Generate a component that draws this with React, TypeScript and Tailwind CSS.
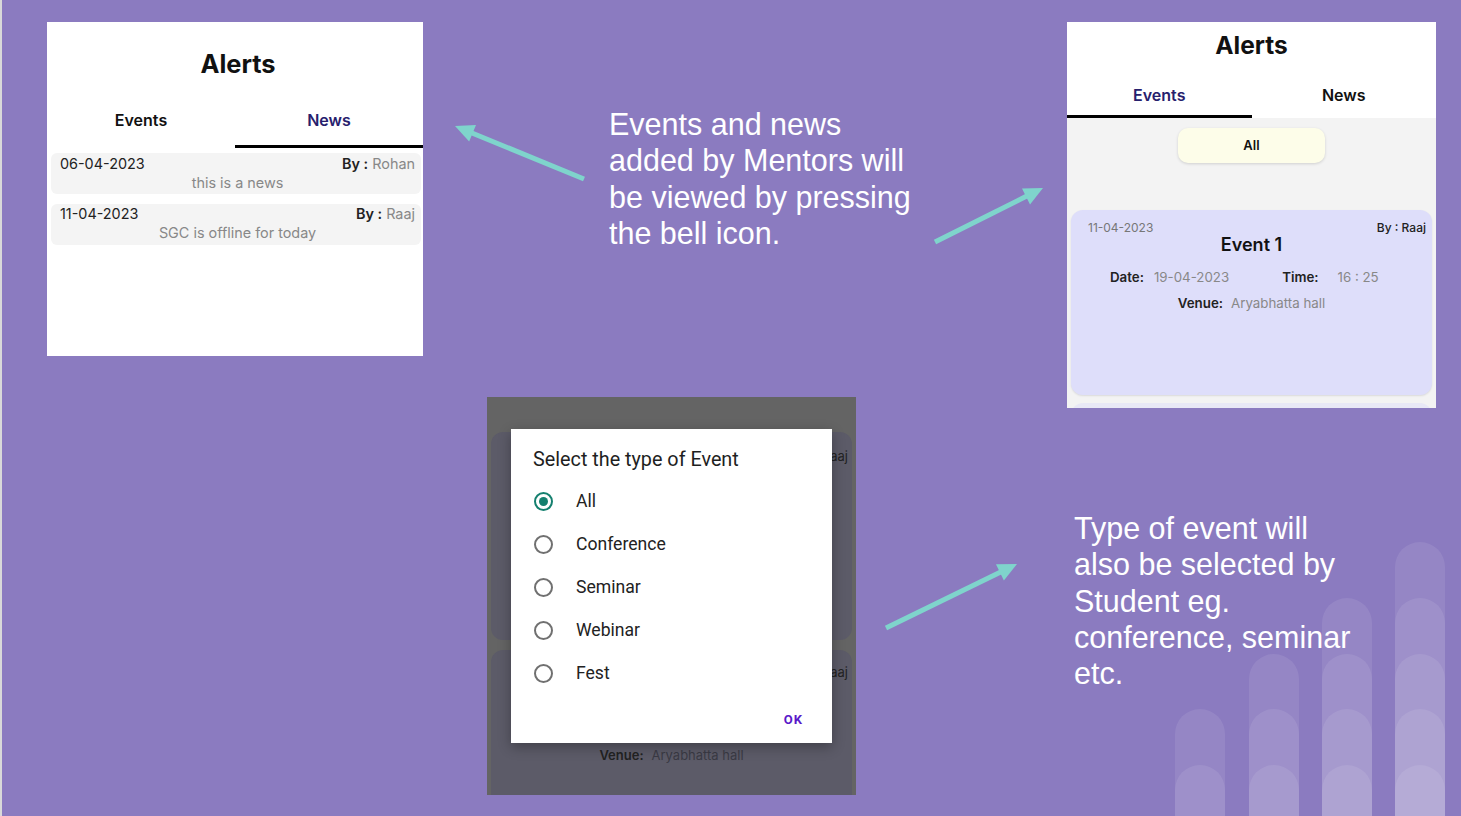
import React from "react";

const TEAL = "#7fd4cc";

function Arrow({ x1, y1, x2, y2 }: { x1: number; y1: number; x2: number; y2: number }) {
  const dx = x2 - x1;
  const dy = y2 - y1;
  const len = Math.hypot(dx, dy);
  const ux = dx / len;
  const uy = dy / len;
  const hl = 19;
  const hw = 9;
  const bx = x2 - ux * hl;
  const by = y2 - uy * hl;
  const px = -uy;
  const py = ux;
  const pts = `${x2},${y2} ${bx + px * hw},${by + py * hw} ${bx - px * hw},${by - py * hw}`;
  return (
    <g>
      <line x1={x1} y1={y1} x2={bx + ux * 2} y2={by + uy * 2} stroke={TEAL} strokeWidth={5} />
      <polygon points={pts} fill={TEAL} />
    </g>
  );
}

function Pills({ left, tops }: { left: number; tops: number[] }) {
  return (
    <>
      {tops.map((t, i) => (
        <div
          key={i}
          className="absolute w-[50px] rounded-t-[25px] bg-white/[0.09]"
          style={{ left, top: t, height: 816 - t }}
        />
      ))}
    </>
  );
}

function Radio({ checked, label }: { checked?: boolean; label: string }) {
  return (
    <div className="flex h-[43px] items-center">
      <div
        className={
          checked
            ? "ml-[23px] flex h-[19px] w-[19px] items-center justify-center rounded-full border-2 border-[#15806f]"
            : "ml-[23px] flex h-[19px] w-[19px] items-center justify-center rounded-full border-2 border-[#707070]"
        }
      >
        {checked && <div className="h-[9px] w-[9px] rounded-full bg-[#15806f]" />}
      </div>
      <span className="ml-[23px] text-[17.6px] text-[#222]">{label}</span>
    </div>
  );
}

export default function App() {
  return (
    <div
      className="relative h-[816px] w-[1461px] overflow-hidden bg-[#8b7bc0]"
      style={{ fontFamily: "Inter, 'Noto Sans', sans-serif" }}
    >
      <div className="absolute left-0 top-0 h-full w-[2px] bg-[#d9d9d9]" />

      {/* decorative pills */}
      <Pills left={1175} tops={[709, 765]} />
      <Pills left={1249} tops={[654, 709, 765]} />
      <Pills left={1322} tops={[598, 654, 709, 765]} />
      <Pills left={1395} tops={[542, 598, 654, 709, 765]} />

      {/* Panel 1: News */}
      <div className="absolute left-[47px] top-[22px] flex h-[334px] w-[376px] flex-col bg-white">
        <div className="flex h-[82px] shrink-0 items-center justify-center pl-[6px] pt-[2px] text-[25.4px] font-bold text-[#111]">Alerts</div>
        <div className="flex h-[44px] shrink-0">
          <div className="flex flex-1 items-start justify-center pt-[4px] text-[16px] font-semibold text-[#111]">Events</div>
          <div className="flex flex-1 items-start justify-center border-b-[3px] border-black pt-[4px] text-[16px] font-semibold text-[#27206d]">
            News
          </div>
        </div>
        <div className="mt-[5px] flex flex-col gap-[10px] pl-[4px] pr-[2px]">
          <div className="flex h-[41px] flex-col rounded-[6px] bg-[#f4f4f4] pl-[9px] pr-[6px] pt-[1px] text-[14.4px] leading-[19px]">
            <div className="flex justify-between">
              <span className="text-[#222]">06-04-2023</span>
              <span className="text-[#888]">
                <b className="font-semibold text-[#222]">By :</b> Rohan
              </span>
            </div>
            <div className="text-center text-[#888]">this is a news</div>
          </div>
          <div className="flex h-[41px] flex-col rounded-[6px] bg-[#f4f4f4] pl-[9px] pr-[6px] pt-[0px] text-[14.4px] leading-[19px]">
            <div className="flex justify-between">
              <span className="text-[#222]">11-04-2023</span>
              <span className="text-[#888]">
                <b className="font-semibold text-[#222]">By :</b> Raaj
              </span>
            </div>
            <div className="text-center text-[#888]">SGC is offline for today</div>
          </div>
        </div>
      </div>

      {/* Panel 2: Events */}
      <div className="absolute left-[1067px] top-[22px] flex h-[386px] w-[369px] flex-col overflow-hidden bg-white">
        <div className="flex h-[44px] shrink-0 items-center justify-center pt-[2px] text-[24.5px] font-bold text-[#111]">Alerts</div>
        <div className="flex h-[52px] shrink-0 bg-white">
          <div className="flex flex-1 items-start justify-center border-b-[3px] border-black pt-[17px] text-[16px] font-semibold text-[#27206d]">
            Events
          </div>
          <div className="flex flex-1 items-start justify-center pt-[17px] text-[16px] font-semibold text-[#111]">News</div>
        </div>
        <div className="flex flex-1 flex-col items-center bg-[#f3f3f3]">
          <div className="mt-[10px] flex h-[35px] w-[147px] shrink-0 items-center justify-center rounded-[10px] bg-[#fdfde9] text-[13px] font-semibold text-[#111] shadow-[0_1px_3px_rgba(0,0,0,0.15)]">
            All
          </div>
          <div className="mt-[47px] flex h-[185px] w-[361px] shrink-0 flex-col rounded-[12px] bg-[#dedefa] px-[6px] pt-[10px] shadow-[0_1px_2px_rgba(0,0,0,0.1)]">
            <div className="flex justify-between pl-[11px] text-[12px] leading-[15px]">
              <span className="text-[#777]">11-04-2023</span>
              <span className="font-medium text-[#222]">By : Raaj</span>
            </div>
            <div className="text-center text-[18px] font-semibold leading-[20px] text-[#111]">Event 1</div>
            <div className="mt-[14px] flex text-[13.3px] leading-[16px]">
              <span className="ml-[33px] font-semibold text-[#222]">Date:</span>
              <span className="ml-[10px] text-[#888]">19-04-2023</span>
              <span className="ml-[53px] font-semibold text-[#222]">Time:</span>
              <span className="ml-[19px] text-[#888]">16 : 25</span>
            </div>
            <div className="mt-[10px] flex justify-center text-[13.3px] leading-[16px]">
              <span className="font-semibold text-[#222]">Venue:</span>
              <span className="ml-[8px] text-[#888]">Aryabhatta hall</span>
            </div>
          </div>
          <div className="mt-[8px] h-[20px] w-[361px] shrink-0 rounded-t-[12px] bg-[#e8e8f6]" />
        </div>
      </div>

      {/* Dialog screenshot */}
      <div className="absolute left-[487px] top-[397px] flex h-[398px] w-[369px] flex-col bg-[#646464] px-[4px] pt-[35px]">
        <div className="relative h-[208px] shrink-0 rounded-[12px] bg-[#5c5b68]">
          <span className="absolute right-[4px] top-[15px] text-[13px] text-[#222]">Raaj</span>
        </div>
        <div className="relative mt-[10px] flex-1 rounded-t-[12px] bg-[#5c5b68]">
          <span className="absolute right-[4px] top-[13px] text-[13px] text-[#222]">Raaj</span>
          <div className="absolute left-0 right-0 top-[96px] flex justify-center text-[13px]">
            <span className="font-semibold text-[#222]">Venue:</span>
            <span className="ml-[8px] text-[#3a3a44]">Aryabhatta hall</span>
          </div>
        </div>
        <div
          className="absolute left-[24px] top-[32px] flex h-[314px] w-[321px] flex-col bg-white shadow-[0_4px_12px_rgba(0,0,0,0.3)]"
          style={{ fontFamily: "Roboto, 'Noto Sans', sans-serif" }}
        >
          <div className="pl-[22px] pt-[19px] text-[19.8px] leading-[24px] text-[#1f1f1f]">Select the type of Event</div>
          <div className="mt-[8px] flex flex-col">
            <Radio checked label="All" />
            <Radio label="Conference" />
            <Radio label="Seminar" />
            <Radio label="Webinar" />
            <Radio label="Fest" />
          </div>
          <div className="mt-[15px] flex justify-end pr-[29px] text-[13px] font-bold tracking-[0.08em] text-[#5a18c9]">OK</div>
        </div>
      </div>

      {/* Slide text */}
      <div
        className="absolute left-[609px] top-[106px] text-[30.5px] leading-[36.3px] text-white"
        style={{ fontFamily: "'Liberation Sans', Arial, sans-serif" }}
      >
        <div>Events and news</div>
        <div>added by Mentors will</div>
        <div>be viewed by pressing</div>
        <div>the bell icon.</div>
      </div>

      <div
        className="absolute left-[1074px] top-[510px] text-[30.5px] leading-[36.3px] text-white"
        style={{ fontFamily: "'Liberation Sans', Arial, sans-serif" }}
      >
        <div>Type of event will</div>
        <div>also be selected by</div>
        <div>Student eg.</div>
        <div>conference, seminar</div>
        <div>etc.</div>
      </div>

      {/* Arrows */}
      <svg className="pointer-events-none absolute left-0 top-0" width={1461} height={816}>
        <Arrow x1={584} y1={179} x2={455} y2={126} />
        <Arrow x1={935} y1={242} x2={1043} y2={188} />
        <Arrow x1={886} y1={628} x2={1017} y2={564} />
      </svg>
    </div>
  );
}
